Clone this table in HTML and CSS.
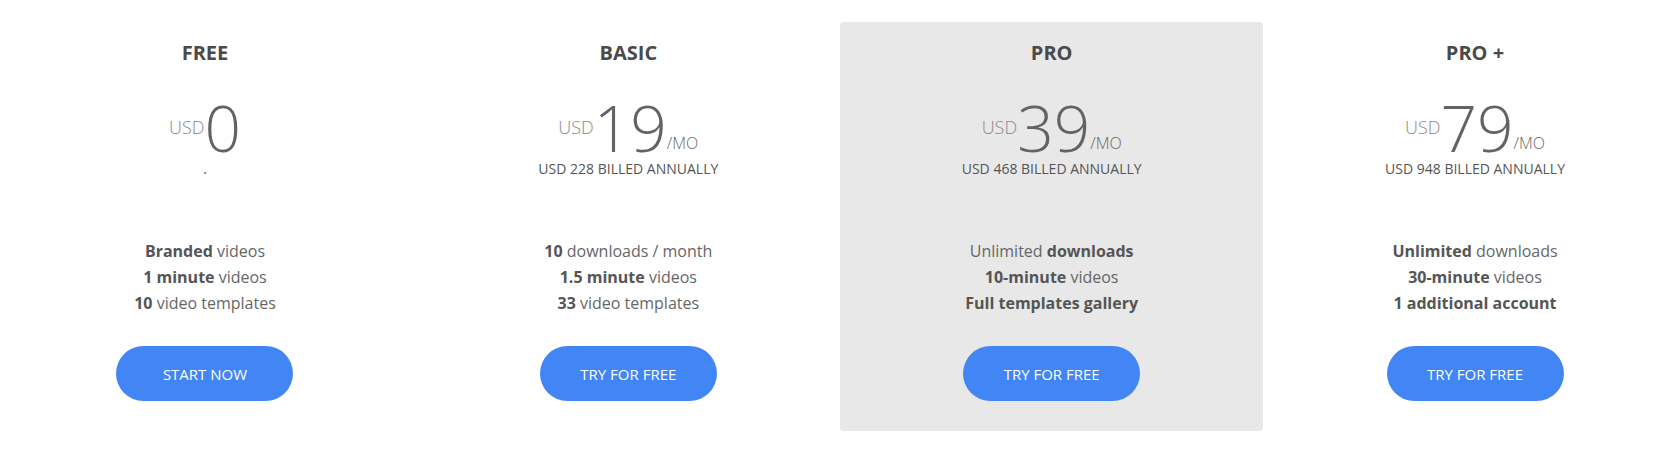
FILE: index.html
```html
<!DOCTYPE html>
<html lang="en">
<head>
<meta charset="utf-8">
<title>Pricing</title>
<link rel="stylesheet" href="styles.css">
</head>
<body>
<div class="plans">
  <div class="plan">
    <h2 class="plan-title">FREE</h2>
    <div class="price"><span class="cur">USD</span><span class="amount">0</span></div>
    <div class="billed">.</div>
    <ul class="features">
      <li><b>Branded</b> videos</li>
      <li><b>1 minute</b> videos</li>
      <li><b>10</b> video templates</li>
    </ul>
    <a class="btn" href="#">START NOW</a>
  </div>
  <div class="plan">
    <h2 class="plan-title">BASIC</h2>
    <div class="price"><span class="cur">USD</span><span class="amount">19</span><span class="per">/MO</span></div>
    <div class="billed">USD 228 BILLED ANNUALLY</div>
    <ul class="features">
      <li><b>10</b> downloads / month</li>
      <li><b>1.5 minute</b> videos</li>
      <li><b>33</b> video templates</li>
    </ul>
    <a class="btn" href="#">TRY FOR FREE</a>
  </div>
  <div class="plan plan-featured">
    <h2 class="plan-title">PRO</h2>
    <div class="price"><span class="cur">USD</span><span class="amount">39</span><span class="per">/MO</span></div>
    <div class="billed">USD 468 BILLED ANNUALLY</div>
    <ul class="features">
      <li>Unlimited <b>downloads</b></li>
      <li><b>10-minute</b> videos</li>
      <li><b>Full templates gallery</b></li>
    </ul>
    <a class="btn" href="#">TRY FOR FREE</a>
  </div>
  <div class="plan">
    <h2 class="plan-title">PRO +</h2>
    <div class="price"><span class="cur">USD</span><span class="amount">79</span><span class="per">/MO</span></div>
    <div class="billed">USD 948 BILLED ANNUALLY</div>
    <ul class="features">
      <li><b>Unlimited</b> downloads</li>
      <li><b>30-minute</b> videos</li>
      <li><b>1 additional account</b></li>
    </ul>
    <a class="btn" href="#">TRY FOR FREE</a>
  </div>
</div>
</body>
</html>
```
FILE: styles.css
```css
html, body {
  margin: 0;
  padding: 0;
  background: #fff;
  overflow: hidden;
}
body {
  font-family: "Open Sans", "Liberation Sans", sans-serif;
  color: #666;
}
.plans {
  display: grid;
  grid-template-columns: repeat(4, 423.35px);
  margin-left: -6.7px;
  padding-top: 22px;
}
.plan {
  display: flex;
  flex-direction: column;
  align-items: center;
  text-align: center;
  padding: 17px 0 30px;
  border-radius: 4px;
}
.plan-featured {
  background: #e8e8e8;
}
.plan-title {
  margin: 0;
  font-size: 20px;
  line-height: 28px;
  font-weight: 700;
  color: #4a4a4a;
}
.price {
  margin-top: 29px;
  font-size: 64px;
  line-height: 63px;
  height: 63px;
  white-space: nowrap;
}
.cur {
  font-size: 18px;
  line-height: 18px;
  font-weight: 300;
  color: #888;
  vertical-align: 18px;
}
.amount {
  font-weight: 300;
  color: #636363;
}
.per {
  font-size: 16px;
  line-height: 16px;
  font-weight: 300;
  color: #666;
  vertical-align: 3px;
}
.billed {
  font-size: 14px;
  line-height: 20px;
  color: #555;
}
.features {
  list-style: none;
  margin: 59px 0 0;
  padding: 0;
  font-size: 16px;
  line-height: 26px;
  color: #666;
}
.features b {
  font-weight: 700;
  color: #555;
}
.btn {
  margin-top: 30px;
  display: flex;
  align-items: center;
  justify-content: center;
  width: 177px;
  height: 55px;
  border-radius: 28px;
  background: #4285f4;
  color: #fff;
  font-size: 15px;
  text-decoration: none;
}
```
